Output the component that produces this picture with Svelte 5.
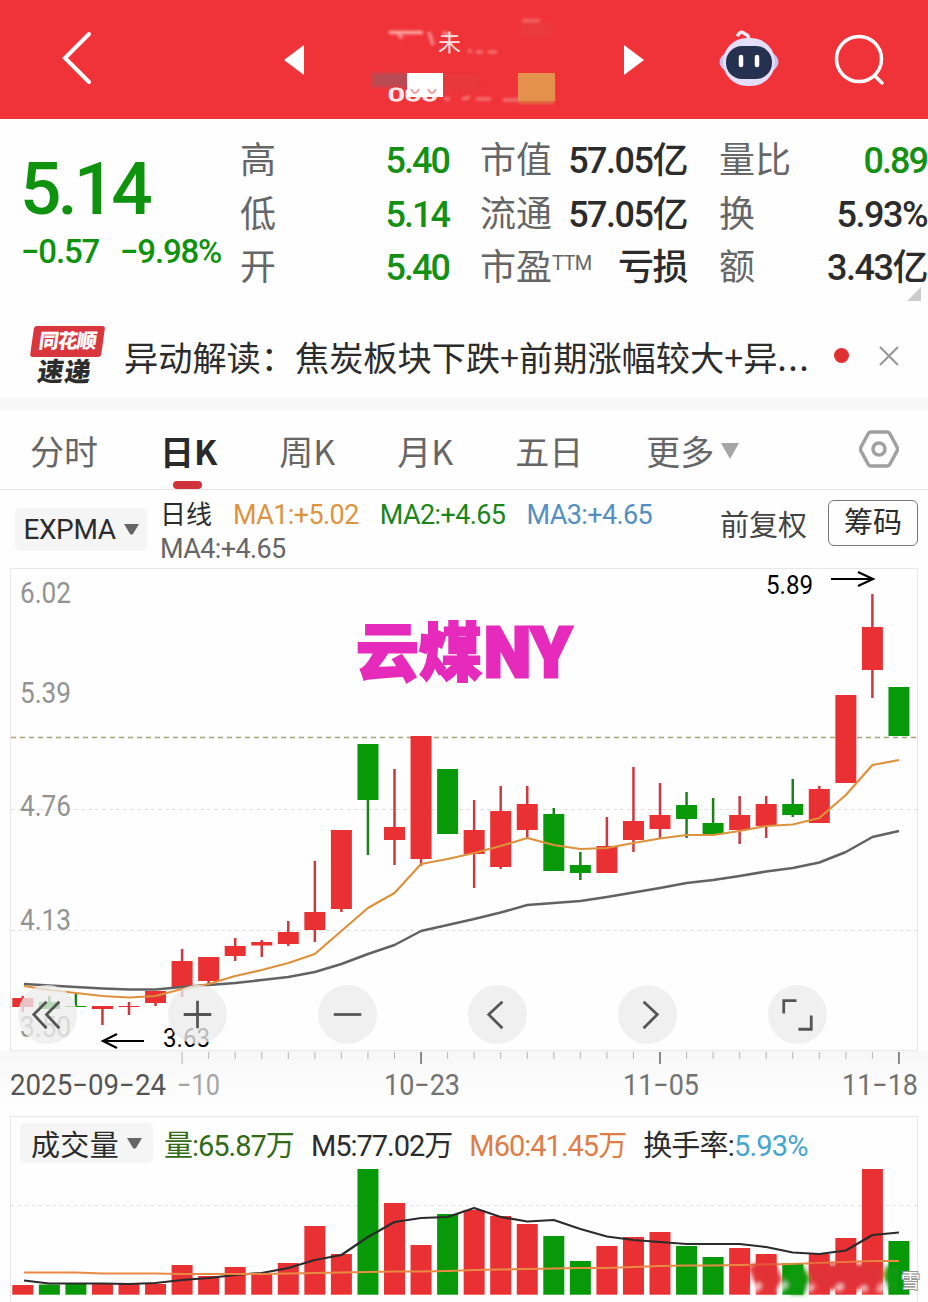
<script>
  // high, body top, body bottom, low, direction
  const candles = [
    [996, 998, 1007, 1012, 'up'],
    [996, 1002, 1009, 1009, 'down'],
    [994, 1006, 1007, 1007, 'down'],
    [1006, 1006, 1009, 1025, 'up'],
    [1002, 1006, 1007, 1015, 'up'],
    [991, 991, 1003, 1006, 'up'],
    [949, 961, 987, 997, 'up'],
    [957, 957, 981, 985, 'up'],
    [938, 946, 956, 961, 'up'],
    [940, 942, 945.5, 957, 'up'],
    [921, 932, 944, 946, 'up'],
    [861, 912, 930, 942, 'up'],
    [830, 830, 909, 912, 'up'],
    [744, 744, 800, 855, 'down'],
    [769, 827, 840, 865, 'up'],
    [736, 736, 859, 866, 'up'],
    [769, 769, 834, 834, 'down'],
    [800, 830, 854, 888, 'up'],
    [786, 811, 867, 869, 'up'],
    [786, 804, 830, 838, 'up'],
    [808, 814, 871, 871, 'down'],
    [852, 865, 873, 880, 'down'],
    [817, 846, 873, 873, 'up'],
    [767, 821, 840, 852, 'up'],
    [783, 815, 829, 838, 'up'],
    [792, 805, 819, 838, 'down'],
    [798, 823, 834, 834, 'down'],
    [796, 815, 830, 844, 'up'],
    [796, 804, 826, 838, 'up'],
    [779, 804, 815, 817, 'down'],
    [786, 789, 823, 823, 'up'],
    [695, 695, 783, 783, 'up'],
    [594, 627, 670, 698, 'up'],
    [687, 687, 736, 736, 'down']
  ];
  const volumes = [
    1285, 1284.5, 1283, 1283, 1284, 1284, 1265, 1276, 1267, 1273, 1263, 1226, 1254, 1169, 1203, 1245, 1214,
    1210, 1216, 1224, 1236, 1261, 1246, 1237, 1232, 1246, 1257, 1248, 1254, 1263, 1254, 1238, 1169, 1241
  ];
  const fast = [
    986, 990, 993, 996, 997.5, 996, 989, 984, 976, 970, 963, 954, 931, 908, 893, 864, 859,
    853, 846, 838, 845, 849, 848, 843, 838.5, 835, 835, 831, 826, 824.5, 818, 795, 765, 760
  ];
  const slow = [
    984, 985.5, 987, 988.5, 989.5, 989.5, 987, 985, 983, 980, 977, 972, 964, 954, 945, 931, 925,
    919, 912.5, 905, 903, 901, 897, 892.5, 888, 883, 880, 876, 871.5, 868, 862.5, 852, 837, 831
  ];
  const m5 = [
    1280.5, 1283.5, 1283.5, 1283.5, 1284, 1283, 1280, 1278, 1275, 1273, 1268, 1260, 1255, 1237, 1222, 1218, 1217,
    1208, 1217, 1221.5, 1220, 1229, 1236.5, 1240, 1242, 1244, 1244, 1244, 1247, 1252.5, 1254, 1250.5, 1235, 1232.5
  ];
  const m60 = [
    1272.5, 1272.5, 1272.5, 1273.5, 1273.5, 1273.5, 1274, 1274, 1274, 1274, 1273.5, 1273, 1272.5, 1272, 1271.5, 1271.5, 1271,
    1270, 1269.5, 1269, 1268.5, 1268, 1268, 1267, 1266, 1265.5, 1265.5, 1265, 1264.5, 1264, 1263, 1262, 1261, 1261
  ];

  const px = (i) => 22.8 + i * 26.55;
  const line = (values) => values.map((y, i) => `${i === 0 ? 24 : px(i)},${y}`).join(' ');

  const yLabels = [
    ['6.02', 603],
    ['5.39', 703],
    ['4.76', 816],
    ['4.13', 930],
    ['3.50', 1037]
  ];
  const tools = ['first', 'plus', 'minus', 'prev', 'next', 'full'];
  const tabs = ['分时', '日K', '周K', '月K', '五日'];
  let tab = '日K';
</script>

<main>
  <header>
    <svg class="back" width="31" height="54" viewBox="0 0 31 54"><path d="M27 3 3 27l24 24" /></svg>
    <svg class="tri left" width="20" height="30"><path d="M20 0v30L0 15z" /></svg>
    <svg class="name" width="186" height="90" viewBox="370 16 186 90">
      <defs>
        <filter id="soft"><feGaussianBlur stdDeviation="1.4" /></filter>
      </defs>
      <g filter="url(#soft)">
        <rect x="522" y="20" width="18" height="3" fill="#f36c6c" />
        <rect x="520" y="24" width="32" height="14" fill="#e93b3e" />
        <rect x="389" y="32" width="34" height="3" fill="#fbb9b4" />
        <path d="M398 36l5 3M429 33l4 13M443 33l9 5" stroke="#f79a97" stroke-width="3" />
        <path d="M468 52h4M476 53h7M488 53h9" stroke="#f77f7e" stroke-width="3" />
        <path d="M444 100h6M462 100l8-2M476 100h15M503 101h16" stroke="#f47e7c" stroke-width="3" />
        <rect x="372" y="74" width="36" height="14" fill="#b94b52" />
        <rect x="443" y="75" width="36" height="18" fill="#e6383d" />
        <rect x="519" y="76" width="35" height="29" fill="#e36e45" />
      </g>
      <text class="frag" x="438" y="52">未</text>
      <text class="code" x="388" y="102" textLength="50" lengthAdjust="spacingAndGlyphs">000</text>
      <rect x="407" y="74" width="36" height="24" fill="#fff" />
      <rect x="518" y="74" width="37" height="28" fill="#e4914e" />
      <path d="M411 90q4 8 8 0M428 90q4 8 8 0" fill="none" stroke="#efa3a3" stroke-width="2" />
    </svg>
    <svg class="tri right" width="20" height="30"><path d="M0 0v30l20-15z" /></svg>
    <svg class="robot" width="60" height="58" viewBox="0 0 60 58">
      <path d="M19 6q3-5 7-1 4 1 4 7" fill="none" stroke="#f7e9f2" stroke-width="3.5" stroke-linecap="round" />
      <ellipse cx="30" cy="33" rx="29.5" ry="15" fill="#c9c2f2" />
      <rect x="4" y="9" width="52" height="48" rx="24" fill="#e4def9" />
      <rect x="7" y="17" width="46" height="33" rx="16" fill="#25314f" />
      <path d="M22 28v8M38 28v8" stroke="#fff" stroke-width="4.500" stroke-linecap="round" />
    </svg>
    <svg class="search" width="52" height="52" viewBox="0 0 52 52"><circle cx="25" cy="25" r="22.5" /><path d="m41 42 7 7" /></svg>
  </header>

  <section class="quote">
    <div class="price">
      <strong>5.14</strong>
      <div class="change"><span>−0.57</span><span>−9.98%</span></div>
    </div>
    <dl>
      <div><dt>高</dt><dd class="green">5.40</dd></div>
      <div><dt>低</dt><dd class="green">5.14</dd></div>
      <div><dt>开</dt><dd class="green">5.40</dd></div>
    </dl>
    <dl>
      <div><dt>市值</dt><dd>57.05亿</dd></div>
      <div><dt>流通</dt><dd>57.05亿</dd></div>
      <div><dt>市盈<sup>TTM</sup></dt><dd>亏损</dd></div>
    </dl>
    <dl>
      <div><dt>量比</dt><dd class="green">0.89</dd></div>
      <div><dt>换</dt><dd>5.93%</dd></div>
      <div><dt>额</dt><dd>3.43亿</dd></div>
    </dl>
    <i class="corner"></i>
  </section>

  <section class="news">
    <div class="badge"><span class="brand">同花顺</span><span class="express">速递</span></div>
    <p>异动解读：焦炭板块下跌+前期涨幅较大+异<span class="dots">...</span></p>
    <i class="dot"></i>
    <svg width="22" height="22"><path d="M2 2l18 18M20 2 2 20" stroke="#999" stroke-width="2.2" /></svg>
  </section>

  <nav>
    {#each tabs as name}
      <button class:active={tab === name} on:click={() => (tab = name)}>{name}</button>
    {/each}
    <button class="more">更多<svg width="18" height="16"><path d="M0 0h18L9 16z" fill="#a6a6a6" /></svg></button>
    <svg class="gear" width="40" height="38" viewBox="0 0 40 38">
      <path d="M12 2h16q2 0 3 2l7 13q1 2 0 4l-7 13q-1 2-3 2H12q-2 0-3-2L2 21q-1-2 0-4L9 4q1-2 3-2z" />
      <circle cx="20" cy="19" r="6" />
    </svg>
  </nav>

  <section class="indicator">
    <button class="pick">EXPMA<svg width="15" height="11"><path d="M0 0h15L9 10q-1.500 1-3 0z" fill="#666" /></svg></button>
    <div class="mas">
      <span class="zh">日线</span><span class="ma1">MA1:+5.02</span><span class="ma2">MA2:+4.65</span><span class="ma3">MA3:+4.65</span>
      <span class="ma4">MA4:+4.65</span>
    </div>
    <span class="adjust">前复权</span>
    <button class="chips">筹码</button>
  </section>

  <div class="chart">
    <svg width="928" height="548" viewBox="0 568 928 548">
      <rect x="0" y="1051" width="928" height="65" fill="url(#fade)" />
      <defs>
        <linearGradient id="fade" x1="0" y1="0" x2="0" y2="1">
          <stop offset="0" stop-color="#f7f7f7" /><stop offset=".7" stop-color="#fdfdfd" /><stop offset="1" stop-color="#fff" />
        </linearGradient>
      </defs>
      <rect x="10.500" y="568.500" width="907" height="482" fill="#fefefe" stroke="#e8e8e8" />
      <path d="M11 809.500h906M11 930.500h906" stroke="#e0e0e0" stroke-dasharray="4 3" />
      <path d="M11 737.500h906" stroke="#aba078" stroke-width="1.500" stroke-dasharray="5 4" />
      {#each yLabels as [label, y]}
        <text class="axis" x="20" {y} textLength="51" lengthAdjust="spacingAndGlyphs">{label}</text>
      {/each}
      <text class="title" x="356" y="675" textLength="126" lengthAdjust="spacingAndGlyphs">云煤</text>
      <text class="title latin" x="484" y="677" textLength="88" lengthAdjust="spacingAndGlyphs">NY</text>
      {#each candles as [high, top, bottom, low, dir], i}
        <g class={dir}>
          <rect class="wick" x={px(i) - 1.25} y={high} width="2.500" height={low - high} />
          <rect x={px(i) - 10.5} y={top} width="21" height={bottom - top} />
        </g>
      {/each}
      <polyline points={line(slow)} stroke="#626262" stroke-width="2.500" />
      <polyline points={line(fast)} stroke="#dc923c" stroke-width="2.200" />
      <text class="mark" x="766" y="594" textLength="47" lengthAdjust="spacingAndGlyphs">5.89</text>
      <path class="arrow" d="M831 579h41M858 572l15 7-15 7" />
      <text class="mark" x="163" y="1047" textLength="47" lengthAdjust="spacingAndGlyphs">3.63</text>
      <path class="arrow" d="M144 1041h-41M117 1034l-14 7 14 7" />
      {#each candles as _, i}
        {#if i >= 6}
          {@const major = i === 15 || i === 24 || i === 33}
          <rect x={px(i) - (major ? 1 : 0.5)} y="1052" width={major ? 2 : 1} height={major || i === 6 ? 12 : 7} fill={major ? '#888' : '#b5b5b5'} />
        {/if}
      {/each}
      <text class="date" x="10" y="1095" textLength="156" lengthAdjust="spacingAndGlyphs">2025−09−24</text>
      <text class="date faint" x="177" y="1095" textLength="43" lengthAdjust="spacingAndGlyphs">−10</text>
      <text class="date light" x="384" y="1095" textLength="76" lengthAdjust="spacingAndGlyphs">10−23</text>
      <text class="date light" x="623" y="1095" textLength="76" lengthAdjust="spacingAndGlyphs">11−05</text>
      <text class="date light" x="842" y="1095" textLength="76" lengthAdjust="spacingAndGlyphs">11−18</text>
    </svg>
    <div class="tools">
      {#each tools as tool}
        <button aria-label={tool}>
          <svg width="59" height="59" viewBox="0 0 60 60">
            {#if tool === 'first'}
              <path d="M29 17 16 30l13 14M42 17 29 30l13 14" />
            {:else if tool === 'plus'}
              <path d="M16 30h28M30 16v28" />
            {:else if tool === 'minus'}
              <path d="M16 30h28" />
            {:else if tool === 'prev'}
              <path d="M35 17 21 30l14 14" />
            {:else if tool === 'next'}
              <path d="m26 17 14 13-14 14" />
            {:else}
              <path d="M16 29V16h13M44 31v14H31" />
            {/if}
          </svg>
        </button>
      {/each}
    </div>
  </div>

  <section class="volume">
    <div class="legend">
      <button class="pick">成交量<svg width="15" height="11"><path d="M0 0h15L9 10q-1.500 1-3 0z" fill="#666" /></svg></button>
      <span class="vol">量:65.87万</span>
      <span class="m5">M5:77.02万</span>
      <span class="m60">M60:41.45万</span>
      <span class="turn">换手率:<b>5.93%</b></span>
    </div>
    <svg width="928" height="136" viewBox="0 1166 928 136">
      <defs>
        <filter id="smear" x="-20%" y="-60%" width="140%" height="220%"><feGaussianBlur stdDeviation="2" /></filter>
      </defs>
      <path d="M11 1205.500h906" stroke="#e2e2e2" stroke-dasharray="3 4" />
      {#each volumes as top, i}
        <rect class={candles[i][4]} x={px(i) - 10.5} y={top} width="21" height={1294.7 - top} />
      {/each}
      <polyline points={line(m5)} stroke="#2b2b2b" stroke-width="2.200" />
      <polyline points={line(m60)} stroke="#e88a44" stroke-width="2.200" />
      <g filter="url(#smear)">
        <path d="M748 1266h28l6 14-6 12h-18z" fill="#e23236" />
        <path d="M752 1264h24l6 16-8 12h-14z" fill="#e23236" />
        <path d="M783 1280l10-14h10l7 12-5 16h-14z" fill="#0a9a0a" />
        <path d="M810 1264h70l4 10-10 16h-50l-14-14z" fill="#e03237" />
        <path d="M886 1266h12v26h-8l-6-14z" fill="#0a9a0a" />
        <path d="M752 1292l8-8M779 1292l7-9M809 1291l4-6M837 1290l5-5M862 1291l4-4M879 1292l5-8" stroke="#fff" stroke-width="5" opacity=".8" />
      </g>
      <text class="stamp" x="901" y="1288">雪</text>
    </svg>
  </section>
</main>

<style>
  :global(body) {
    background: #fff;
  }
  main {
    width: 928px;
    height: 1302px;
    overflow: hidden;
    background: #fefefe;
    color: #2c2c2c;
    font-family: Roboto, "Noto Sans CJK SC", sans-serif;
  }
  button {
    padding: 0;
    border: 0;
    background: none;
    font: inherit;
    color: inherit;
  }
  svg {
    display: block;
    flex: none;
  }
  p, dl, dd {
    margin: 0;
  }
  header {
    display: flex;
    align-items: center;
    height: 119px;
    box-sizing: border-box;
    padding-left: 62px;
    background: #f03239;
  }
  .back { fill: none; stroke: #fff; stroke-width: 4; stroke-linecap: round; margin-top: -4px; }
  .tri { fill: #fff; }
  .left { margin-left: 191px; }
  .name { margin-left: 66px; }
  .right { margin-left: 68px; }
  .robot { margin: -3px 0 0 75px; }
  .search { margin-left: 55px; fill: none; stroke: #fff; stroke-width: 3.5; stroke-linecap: round; }
  .frag { font-size: 23px; fill: #ffe3e1; }
  .code { font-size: 18px; fill: #ffe8e8; stroke: #ffe8e8; }

  .quote {
    position: relative;
    display: grid;
    grid-template-columns: 218px 209px 207px 208px;
    height: 191px;
    box-sizing: border-box;
    padding: 16px 0 0 22px;
  }
  .quote dl:nth-of-type(2) { margin-left: 31px; margin-right: -31px; }
  .quote dl:nth-of-type(3) { margin-left: 63px; margin-right: -63px; }
  .quote dl > div {
    display: flex;
    justify-content: space-between;
    height: 53.5px;
    line-height: 53px;
    font-size: 36px;
    white-space: nowrap;
  }
  dt { color: #666; }
  dd { font-weight: 500; letter-spacing: -1.5px; }
  .green { color: #149014; letter-spacing: -2px; }
  sup { font-size: 20px; line-height: 0; vertical-align: 10px; letter-spacing: -0.7px; }
  .price { color: #0f930f; font-weight: 500; }
  strong {
    display: block;
    margin: 16px 0 0 -2px;
    height: 76px;
    line-height: 76px;
    font-size: 73px;
    font-weight: 500;
    letter-spacing: -4px;
  }
  .change { display: flex; gap: 21px; margin: 6px 0 0 -1px; font-size: 33px; line-height: 38px; letter-spacing: -1.2px; white-space: nowrap; }
  .corner {
    position: absolute;
    right: 7px;
    top: 168px;
    border: solid transparent;
    border-width: 14px 0 0 14px;
    border-bottom: 14px solid #ccc;
    border-top: 0;
  }

  .news {
    display: flex;
    align-items: center;
    height: 88px;
    padding: 3px 0 0 30px;
    box-sizing: border-box;
  }
  .badge { width: 74px; height: 60px; transform: skewX(-8deg); text-align: center; font-weight: 900; margin-top: 1px; }
  .badge span { display: block; }
  .brand { height: 31px; line-height: 31px; margin: 0 3px 0 0; border-radius: 3px; background: #d9363d; color: #fff; font-size: 20px; letter-spacing: -1px; }
  .express { font-size: 26px; line-height: 31px; height: 28px; letter-spacing: 1px; }
  .news p { margin-left: 20px; width: 690px; font-family: "Noto Sans CJK SC", sans-serif; font-size: 34.2px; line-height: 50px; white-space: nowrap; }
  .dots { letter-spacing: 1.5px; }
  .dot { width: 15px; height: 15px; border-radius: 50%; background: #e13233; margin-left: 20px; margin-right: 29px; flex: none; }

  nav {
    display: flex;
    align-items: center;
    height: 92px;
    box-sizing: border-box;
    border-top: 12px solid #f7f7f7;
    border-bottom: 1px solid #e5e5e5;
    padding: 2px 0 0 30px;
    color: #666;
    font-family: "Noto Sans CJK SC", sans-serif;
    font-size: 34px;
    line-height: 50px;
  }
  nav button { margin-right: 62px; position: relative; white-space: nowrap; }
  nav button:nth-child(5) { margin-right: 63px; }
  .active { color: #2a2a2a; font-weight: 700; }
  .active::after {
    content: '';
    position: absolute;
    left: 13px;
    top: 55px;
    width: 29px;
    height: 8px;
    border-radius: 4px;
    background: #d0343a;
  }
  .more { display: flex; align-items: center; gap: 7px; }
  nav .more { margin-right: 0; }
  .gear { margin: -3px 29px 0 auto; fill: none; stroke: #a0a0a0; stroke-width: 3.5; }

  .indicator {
    display: flex;
    height: 78px;
    padding-left: 15px;
  }
  .pick {
    display: flex;
    align-items: center;
    justify-content: center;
    flex: none;
    border-radius: 5px;
    background: #f5f5f5;
    color: #2c2c2c;
  }
  .indicator .pick { gap: 8px; width: 132px; height: 43px; margin-top: 18px; font-size: 28px; letter-spacing: -0.4px; }
  .mas { display: flex; flex-wrap: wrap; align-content: flex-start; column-gap: 21px; width: 510px; margin: 8px 0 0 13px; font-size: 27px; line-height: 34px; letter-spacing: -0.6px; flex: none; }
  .mas .zh { font-size: 26px; letter-spacing: 0; }
  .ma1 { color: #dd943f; }
  .ma2 { color: #1a861a; }
  .ma3 { color: #548fc0; }
  .ma4 { color: #666; }
  .adjust { margin: 17px 0 0 50px; font-size: 29px; line-height: 38px; color: #444; white-space: nowrap; }
  .chips { width: 90px; height: 46px; margin: 10px 0 0 21px; border: 1px solid #777; border-radius: 6px; font-size: 29px; line-height: 44px; box-sizing: border-box; flex: none; }

  .chart { position: relative; height: 548px; }
  polyline { fill: none; stroke-linejoin: round; }
  .up { fill: #e93134; }
  .down { fill: #079907; }
  .up .wick { fill: #ca3a40; }
  .down .wick { fill: #1c7f1c; }
  .axis { font-size: 29px; fill: #939393; }
  .mark { font-size: 26px; fill: #000; }
  .arrow { fill: none; stroke: #000; stroke-width: 2.2; }
  .date { font-size: 29px; fill: #555; }
  .light { fill: #727272; }
  .faint { fill: #a5a5a5; }
  .title { font-size: 63px; font-weight: 900; fill: #e62abb; stroke: #e62abb; stroke-width: 2; }
  .latin { font-size: 70px; stroke-width: 3; }
  .tools {
    position: absolute;
    left: 17.5px;
    top: 417px;
    display: flex;
    gap: 91.1px;
  }
  .tools button { width: 59px; height: 59px; border-radius: 50%; background: rgba(236, 236, 236, 0.78); }
  .tools path { fill: none; stroke: #555; stroke-width: 2.8; }

  .volume {
    height: 186px;
    background: linear-gradient(#e8e8e8, #e8e8e8) 10px 0 / 908px 1px no-repeat,
      linear-gradient(#e8e8e8, #e8e8e8) 10px 0 / 1px 100% no-repeat,
      linear-gradient(#e8e8e8, #e8e8e8) 917px 0 / 1px 100% no-repeat;
  }
  .legend { display: flex; align-items: center; height: 50px; padding: 4px 0 0 20px; box-sizing: border-box; font-size: 29px; letter-spacing: -1px; white-space: nowrap; }
  .volume .pick { gap: 8px; width: 133px; height: 40px; letter-spacing: 0.3px; }
  .legend span { margin-left: 17px; }
  .legend .vol { margin-left: 11px; }
  .legend .turn { letter-spacing: -0.8px; }
  .vol { color: #336b16; }
  .m60 { color: #dd7e48; }
  b { font-weight: 400; color: #45a5cc; }
  .stamp { font-size: 19px; fill: #fff; stroke: #999; stroke-width: 2; paint-order: stroke; }
</style>
